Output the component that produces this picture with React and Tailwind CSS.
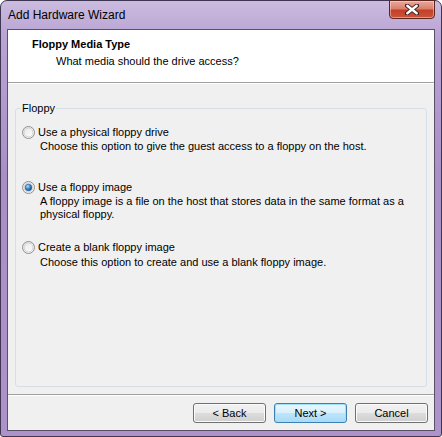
import React from "react";

function Radio({ checked }) {
  return (
    <svg width="13" height="13" viewBox="0 0 13 13" className="shrink-0">
      <defs>
        <linearGradient id="rb" x1="0" y1="0" x2="1" y2="1">
          <stop offset="0" stopColor="#e6e6e6" />
          <stop offset="1" stopColor="#ffffff" />
        </linearGradient>
        <radialGradient id="rd" cx="0.35" cy="0.3" r="0.8">
          <stop offset="0" stopColor="#b8e0f8" />
          <stop offset="0.5" stopColor="#3a8ad0" />
          <stop offset="1" stopColor="#0d3f78" />
        </radialGradient>
      </defs>
      <circle cx="6.5" cy="6.5" r="6" fill="url(#rb)" stroke="#8f8f8f" strokeWidth="1" />
      <circle cx="6.5" cy="6.5" r="4.5" fill="none" stroke="#d0d0d0" strokeWidth="1" />
      {checked && <circle cx="6.5" cy="6.5" r="3.3" fill="url(#rd)" stroke="#1d4f86" strokeWidth="0.6" />}
    </svg>
  );
}

function Option({ checked, label, children, className }) {
  return (
    <div className={className}>
      <div className="flex items-center h-[14px] gap-[3px]">
        <Radio checked={checked} />
        <span className="leading-[14px]">{label}</span>
      </div>
      <div className="pl-[18px] leading-[13px] mt-[1px]">{children}</div>
    </div>
  );
}

function Btn({ children, def }) {
  return (
    <div
      className={
        "w-[73px] h-[20px] rounded-[3px] border flex items-center justify-center leading-[18px] " +
        (def
          ? "border-[#3c7fb1] bg-[linear-gradient(#eaf6fd_0%,#d9f0fc_50%,#bee6fd_51%,#a7d9f5_100%)] shadow-[inset_0_0_0_1px_#9ce2fa]"
          : "border-[#707070] bg-[linear-gradient(#f2f2f2_0%,#ebebeb_50%,#dddddd_51%,#cfcfcf_100%)] shadow-[inset_0_0_0_1px_#fbfbfb]")
      }
    >
      {children}
    </div>
  );
}

export default function App() {
  return (
    <div
      className="w-[442px] h-[437px] relative flex flex-col rounded-t-[7px] rounded-b-[3px] border border-[#3e3652] bg-[linear-gradient(180deg,#cbbcdf_0%,#b9a4d4_8%,#a98fc6_40%,#ad93c9_100%)] text-[11px] text-black"
      style={{ fontFamily: '"Liberation Sans", Arial, sans-serif' }}
    >
      <div className="h-[28px] flex items-center pl-[7px] shrink-0">
        <span className="text-[12px] leading-[14px] text-black">Add Hardware Wizard</span>
      </div>
      <div className="absolute top-[-1px] right-[6px] w-[46px] h-[19px] rounded-b-[4px] border border-[#5b2520] bg-[linear-gradient(#eaa99c_0%,#d9806c_45%,#c53f28_55%,#c7563a_100%)] flex items-center justify-center shadow-[inset_0_0_0_1px_rgba(255,220,210,0.5)]">
        <svg width="14" height="11" viewBox="0 0 14 11">
          <path d="M2 1.5 L12 9.5 M12 1.5 L2 9.5" stroke="#40221e" strokeWidth="4.2" strokeLinecap="round" />
          <path d="M2.3 1.8 L11.7 9.2 M11.7 1.8 L2.3 9.2" stroke="#ffffff" strokeWidth="2.4" strokeLinecap="round" />
        </svg>
      </div>
      <div className="mx-[6px] h-[402px] border border-[#5a5068] bg-[#f0f0f0] flex flex-col">
        <div className="h-[52px] bg-white shrink-0 pt-[8px] pl-[24px]">
          <div className="font-bold leading-[13px]">Floppy Media Type</div>
          <div className="pl-[24px] leading-[13px] mt-[4px]">What media should the drive access?</div>
        </div>
        <div className="h-[1px] bg-[#a0a0a0] shrink-0" />
        <div className="h-[1px] bg-white shrink-0" />
        <div className="flex-1 flex flex-col">
          <div className="h-[24px]" />
          <div className="relative mx-[7px] h-[279px] border border-[#d5dfe5] rounded-[3px] pl-[6px]">
            <span className="absolute left-[5px] top-[-8px] px-[1px] bg-[#f0f0f0] leading-[14px]">Floppy</span>
            <Option className="mt-[16px]" checked={false} label="Use a physical floppy drive">
              Choose this option to give the guest access to a floppy on the host.
            </Option>
            <Option className="mt-[27px]" checked={true} label="Use a floppy image">
              A floppy image is a file on the host that stores data in the same format as a
              <br />
              physical floppy.
            </Option>
            <Option className="mt-[19px]" checked={false} label="Create a blank floppy image">
              <div className="mt-[2px]">Choose this option to create and use a blank floppy image.</div>
            </Option>
          </div>
          <div className="flex-1" />
          <div className="h-[1px] bg-[#a0a0a0]" />
          <div className="h-[1px] bg-white" />
          <div className="h-[34px] flex justify-end items-start pt-[7px] pr-[6px] gap-[8px]">
            <Btn>&lt; Back</Btn>
            <Btn def>Next &gt;</Btn>
            <Btn>Cancel</Btn>
          </div>
        </div>
      </div>
    </div>
  );
}
